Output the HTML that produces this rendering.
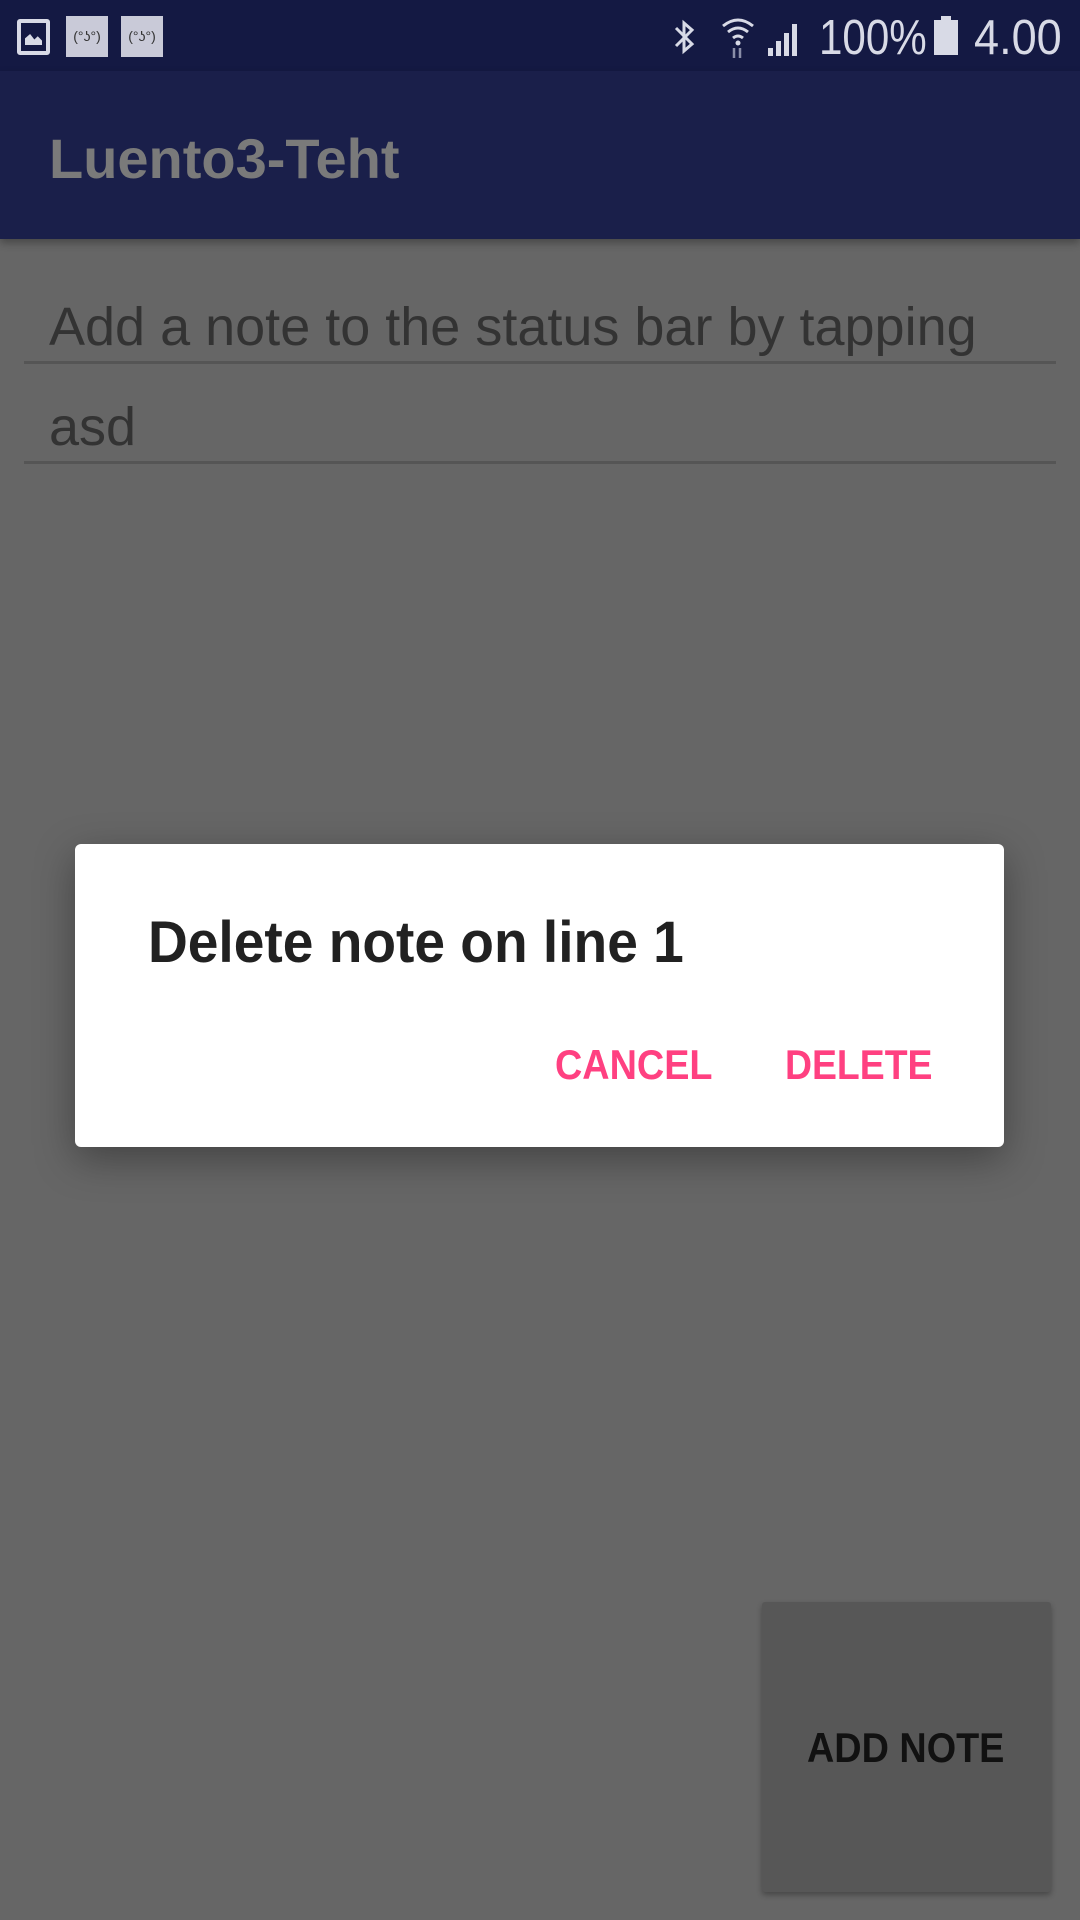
<!DOCTYPE html>
<html><head><meta charset="utf-8"><style>
*{margin:0;padding:0;box-sizing:border-box}
body{width:1080px;height:1920px;background:#666;font-family:"Liberation Sans",sans-serif;position:relative;overflow:hidden}
.abs{position:absolute;white-space:nowrap}
.sx{transform-origin:0 0}
</style></head><body>
<div class="abs" style="left:0;top:0;width:1080px;height:71px;background:#141943"></div>
<div class="abs" style="left:0;top:71px;width:1080px;height:168px;background:#1a1f4a;box-shadow:0 4px 8px rgba(0,0,0,.3)"></div>
<div class="abs" style="left:17px;top:19px;width:33px;height:36px;border:4px solid #d8dae6;border-radius:3px"></div>
<div class="abs" style="left:25px;top:34px;width:17px;height:11px;background:#d8dae6;clip-path:polygon(0 100%,0 40%,30% 0,55% 50%,75% 20%,100% 60%,100% 100%)"></div>
<div class="abs" style="left:66px;top:16px;width:42px;height:41px;background:#c9cad8;font-size:14px;color:#333;line-height:41px;text-align:center">(°ʖ°)</div>
<div class="abs" style="left:121px;top:16px;width:42px;height:41px;background:#c9cad8;font-size:14px;color:#333;line-height:41px;text-align:center">(°ʖ°)</div>
<svg class="abs" style="left:670px;top:18px" width="30" height="38" viewBox="0 0 30 38"><path d="M6 10 L22 26 L14 33 L14 5 L22 12 L6 28" fill="none" stroke="#d8dae6" stroke-width="3"/></svg>
<svg class="abs" style="left:720px;top:16px" width="36" height="42" viewBox="0 0 36 42"><path d="M3 10 Q18 -2 33 10 M8 16 Q18 8 28 16 M13 22 Q18 18 23 22" fill="none" stroke="#d8dae6" stroke-width="3"/><circle cx="18" cy="27" r="2.5" fill="#d8dae6"/><path d="M14 32 V42 M20 42 V32" stroke="#8a8ea8" stroke-width="2.5"/></svg>
<svg class="abs" style="left:766px;top:18px" width="38" height="38" viewBox="0 0 38 38"><rect x="2" y="30" width="5" height="8" fill="#d8dae6"/><rect x="10" y="23" width="5" height="15" fill="#d8dae6"/><rect x="18" y="15" width="5" height="23" fill="#d8dae6"/><rect x="26" y="6" width="5" height="32" fill="#d8dae6"/></svg>
<div class="abs sx" style="left:819px;top:10px;font-size:49px;color:#d8dae6;transform:scaleX(0.86)">100%</div>
<div class="abs" style="left:934px;top:20px;width:24px;height:35px;background:#d8dae6"></div>
<div class="abs" style="left:941px;top:16px;width:10px;height:5px;background:#d8dae6"></div>
<div class="abs sx" style="left:974px;top:10px;font-size:49px;color:#d8dae6;transform:scaleX(0.92)">4.00</div>
<div class="abs" style="left:49px;top:126px;font-size:56px;font-weight:bold;color:#7a7a7a">Luento3-Teht</div>
<div class="abs" style="left:49px;top:296px;font-size:54px;color:#333">Add a note to the status bar by tapping</div>
<div class="abs" style="left:24px;top:361px;width:1032px;height:3px;background:#555"></div>
<div class="abs" style="left:49px;top:396px;font-size:54px;color:#333">asd</div>
<div class="abs" style="left:24px;top:461px;width:1032px;height:3px;background:#555"></div>
<div class="abs" style="left:75px;top:844px;width:929px;height:303px;background:#fff;border-radius:6px;box-shadow:0 12px 40px rgba(0,0,0,.35)"></div>
<div class="abs sx" style="left:148px;top:909px;font-size:58px;font-weight:bold;color:#212121;transform:scaleX(0.95)">Delete note on line 1</div>
<div class="abs sx" style="left:555px;top:1041px;font-size:42px;font-weight:bold;color:#ff4081;transform:scaleX(0.9)">CANCEL</div>
<div class="abs sx" style="left:785px;top:1041px;font-size:42px;font-weight:bold;color:#ff4081;transform:scaleX(0.89)">DELETE</div>
<div class="abs" style="left:762px;top:1602px;width:289px;height:290px;background:#575757;box-shadow:0 3px 6px rgba(0,0,0,.3);border-radius:3px"></div>
<div class="abs sx" style="left:807px;top:1724px;font-size:42px;font-weight:bold;color:#111;transform:scaleX(0.9)">ADD NOTE</div>
</body></html>
